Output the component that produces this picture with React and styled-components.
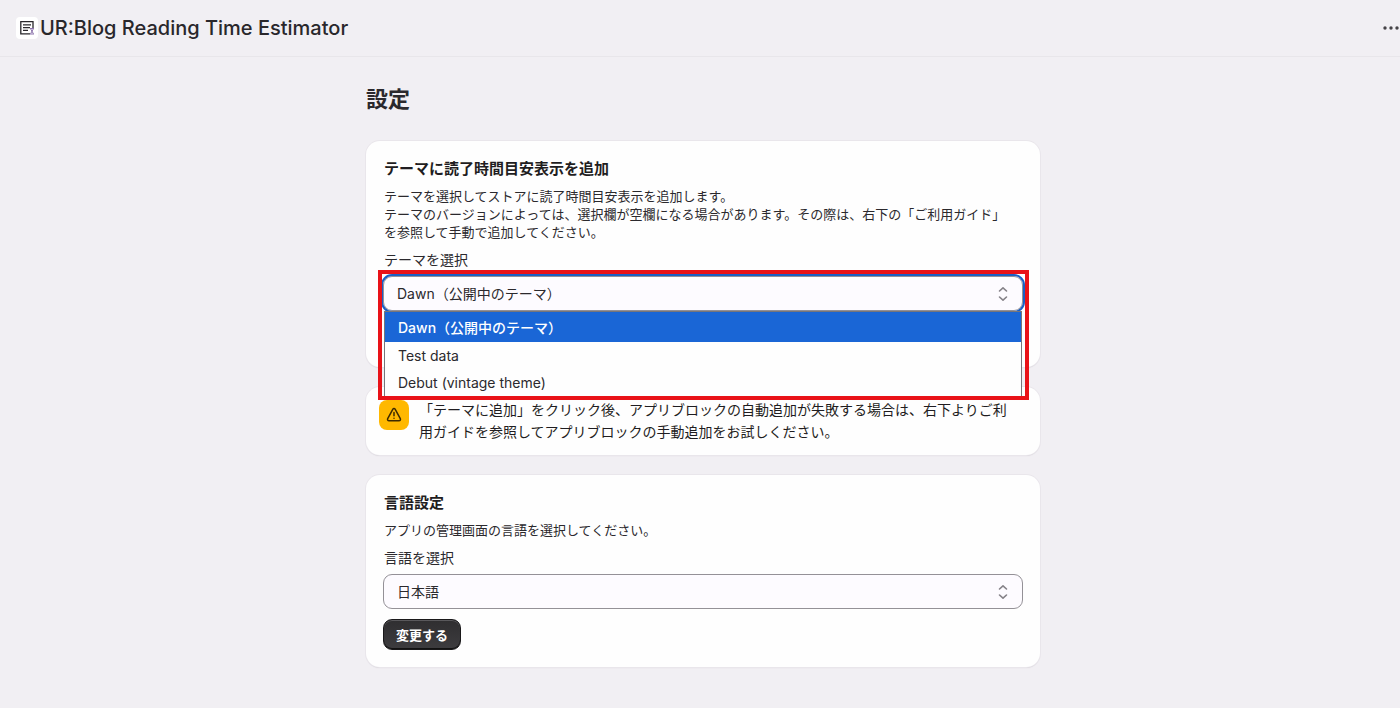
import React, { useState } from "react";
import styled, { createGlobalStyle, css } from "styled-components";

const Global = createGlobalStyle`
  * { box-sizing: border-box; }
  body {
    margin: 0;
    min-height: 100vh;
    background: #f1eff3;
    color: #2b292d;
    font-family: Inter, "Noto Sans CJK JP", sans-serif;
    overflow-x: hidden;
  }
`;

const Header = styled.header`
  display: flex;
  align-items: center;
  justify-content: space-between;
  height: 57px;
  padding-left: 16px;
  border-bottom: 1px solid #e8e6ea;
`;

const Brand = styled.div`
  display: flex;
  align-items: center;
  gap: 2px;
`;

const AppIcon = styled.span`
  display: flex;
  width: 22px;
  height: 22px;
  border-radius: 4px;
  background: #fff;
`;

const AppName = styled.h1`
  margin: 0;
  font-size: 20px;
  line-height: 28px;
  font-weight: 500;
  color: #29272b;
`;

const MoreButton = styled.button`
  display: flex;
  padding: 8px 0;
  border: 0;
  background: none;
  color: #454347;
`;

const Main = styled.main`
  display: flex;
  flex-direction: column;
  max-width: 680px;
  margin: 0 auto;
  padding: 28px 0 40px 6px;
`;

const PageTitle = styled.h2`
  margin: 0 0 28px;
  font-size: 22px;
  line-height: 28px;
  font-weight: 600;
`;

const Stack = styled.div`
  display: flex;
  flex-direction: column;
  gap: 20px;
`;

const surface = css`
  border-radius: 14px;
  background: #fefefe;
  box-shadow: 0 0 0 1px #e9e6eb, 0 1px 1px 0 #cfccd2;
`;

const Card = styled.section`
  ${surface}
  padding: 18px 17px ${(p) => (p.$roomy ? 56 : 17)}px;
`;

const CardTitle = styled.h3`
  margin: 0 0 8px;
  padding-left: 1px;
  font-size: 15px;
  line-height: 20px;
  font-weight: 600;
  color: #1f1d21;
`;

const Text = styled.p`
  margin: 0 0 9px;
  padding: 0 12px 0 1px;
  font-size: 13px;
  line-height: 18px;
`;

const Label = styled.label`
  display: block;
  margin-bottom: 6px;
  padding-left: 1px;
  font-size: 14px;
  line-height: 20px;
`;

const Field = styled.div`
  position: relative;
`;

const Select = styled.select`
  display: block;
  width: 100%;
  height: 35px;
  padding: 0 40px 0 13px;
  appearance: none;
  border: 1px solid #949197;
  border-radius: 9px;
  outline: ${(p) => (p.$open ? "2px solid #1b5fc4" : "none")};
  background: #fdfbff;
  color: #2b292d;
  font: inherit;
  font-size: 14px;
`;

const Arrows = styled.svg`
  position: absolute;
  top: 10px;
  right: 14px;
  pointer-events: none;
`;

const Highlight = styled.div`
  position: absolute;
  z-index: 2;
  top: -6px;
  left: -5px;
  right: -6px;
  height: 130px;
  border: 4px solid #e91218;
  pointer-events: none;
`;

const Menu = styled.ul`
  position: absolute;
  z-index: 1;
  top: 35px;
  left: 1px;
  right: 1px;
  height: 86px;
  margin: 0;
  padding: 0;
  list-style: none;
  border: 1px solid #77757a;
  background: #fefefe;
`;

const Option = styled.li`
  height: ${(p) => (p.$selected ? 30 : 27)}px;
  padding-left: 13px;
  font-size: 14px;
  line-height: ${(p) => (p.$selected ? 32 : 27)}px;
  font-weight: ${(p) => (p.$selected ? 500 : 400)};
  background: ${(p) => (p.$selected ? "#1a66d6" : "transparent")};
  color: ${(p) => (p.$selected ? "#fff" : "#2b292d")};
`;

const Banner = styled.aside`
  ${surface}
  display: flex;
  align-items: flex-start;
  gap: 10px;
  padding: 12px 20px 12px 13px;
`;

const WarningBadge = styled.span`
  display: flex;
  flex: none;
  align-items: center;
  justify-content: center;
  width: 30px;
  height: 30px;
  margin-top: 1px;
  border-radius: 8px;
  background: #ffb800;
  color: #3d2a00;
`;

const BannerText = styled.p`
  margin: 0;
  font-size: 14px;
  line-height: 22px;
  color: #1f1d21;
`;

const PrimaryButton = styled.button`
  display: block;
  height: 31px;
  margin-top: 10px;
  padding: 0 12px;
  border: 1px solid #19181a;
  border-radius: 9px;
  background: linear-gradient(#2f2e30, #3d3c3f);
  box-shadow: inset 0 1px 0 #5a595c, inset 0 -1px 0 #111;
  color: #fff;
  font: inherit;
  font-size: 13px;
  font-weight: 700;
`;

const themes = ["Dawn（公開中のテーマ）", "Test data", "Debut (vintage theme)"];

function SelectArrows() {
  return (
    <Arrows width="12" height="16" viewBox="0 0 12 16" fill="none" stroke="#858288" strokeWidth="1.6" strokeLinecap="round" strokeLinejoin="round" aria-hidden="true">
      <path d="M2.5 5 6 1.8 9.5 5M2.5 11 6 14.2 9.5 11" />
    </Arrows>
  );
}

export default function App() {
  const [theme, setTheme] = useState(themes[0]);
  return (
    <>
      <Global />
      <Header>
        <Brand>
          <AppIcon>
            <svg width="22" height="22" viewBox="0 0 22 22" fill="none" aria-hidden="true">
              <path d="M17 11V4.7H4.8v12.2H14" stroke="#29272b" strokeWidth="1.3" />
              <path d="M7 7.8h8M7 10.6h7M7 13.4h5" stroke="#29272b" strokeWidth="1.3" />
              <path d="M14 11.5h4M14 17h4M14.7 12l2.7 4.7M17.3 12l-2.7 4.7" stroke="#8d74ad" strokeWidth="1" />
            </svg>
          </AppIcon>
          <AppName>UR:Blog Reading Time Estimator</AppName>
        </Brand>
        <MoreButton type="button" aria-label="その他">
          <svg width="18" height="6" viewBox="0 0 18 6" fill="currentColor" aria-hidden="true">
            <circle cx="3" cy="3" r="1.7" />
            <circle cx="9" cy="3" r="1.7" />
            <circle cx="15" cy="3" r="1.7" />
          </svg>
        </MoreButton>
      </Header>
      <Main>
        <PageTitle>設定</PageTitle>
        <Stack>
          <Card $roomy>
            <CardTitle>テーマに読了時間目安表示を追加</CardTitle>
            <Text>
              テーマを選択してストアに読了時間目安表示を追加します。
              <br />
              テーマのバージョンによっては、選択欄が空欄になる場合があります。その際は、右下の「ご利用ガイド」を参照して手動で追加してください。
            </Text>
            <Label htmlFor="theme">テーマを選択</Label>
            <Field>
              <Select id="theme" $open value={theme} onChange={(e) => setTheme(e.target.value)}>
                {themes.map((t) => (
                  <option key={t}>{t}</option>
                ))}
              </Select>
              <SelectArrows />
              <Menu role="listbox" aria-label="テーマを選択">
                {themes.map((t) => (
                  <Option key={t} role="option" aria-selected={t === theme} $selected={t === theme} onClick={() => setTheme(t)}>
                    {t}
                  </Option>
                ))}
              </Menu>
              <Highlight />
            </Field>
          </Card>
          <Banner>
            <WarningBadge>
              <svg width="16" height="16" viewBox="0 0 16 16" fill="none" stroke="currentColor" strokeWidth="1.5" strokeLinecap="round" strokeLinejoin="round" aria-hidden="true">
                <path d="M6.9 2.2 1.7 11.6c-.5 1 .1 2.2 1.3 2.2h10c1.2 0 1.8-1.2 1.3-2.2L9.1 2.2c-.5-.9-1.7-.9-2.2 0zM8 5.6v3.2M8 11.2v.1" />
              </svg>
            </WarningBadge>
            <BannerText>
              「テーマに追加」をクリック後、アプリブロックの自動追加が失敗する場合は、右下よりご利用ガイドを参照してアプリブロックの手動追加をお試しください。
            </BannerText>
          </Banner>
          <Card>
            <CardTitle>言語設定</CardTitle>
            <Text>アプリの管理画面の言語を選択してください。</Text>
            <Label htmlFor="language">言語を選択</Label>
            <Field>
              <Select id="language" defaultValue="日本語">
                <option>日本語</option>
              </Select>
              <SelectArrows />
            </Field>
            <PrimaryButton type="button">変更する</PrimaryButton>
          </Card>
        </Stack>
      </Main>
    </>
  );
}
